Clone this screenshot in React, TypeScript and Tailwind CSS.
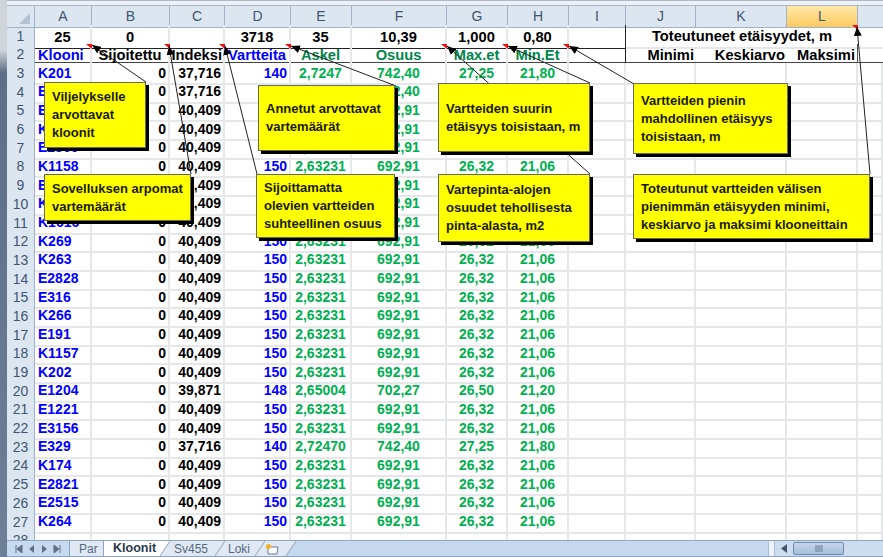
import React from 'react';

const rowGrid = "grid grid-cols-[28px_57px_78px_55px_66px_61px_95px_61px_61px_57px_70px_91px_71px_1fr]";

type Row = [string, string, string, string, string, string, string];

const big: Row = ['0', '40,409', '150', '2,63231', '692,91', '26,32', '21,06'];
const small: Row = ['0', '37,716', '140', '2,72470', '742,40', '27,25', '21,80'];

const rows: [string, Row][] = [
  ['K201', ['0', '37,716', '140', '2,7247', '742,40', '27,25', '21,80']],
  ['E2862', small],
  ['E2863', big],
  ['K1159', big],
  ['E2860', big],
  ['K1158', big],
  ['E2861', big],
  ['K1615', big],
  ['K1616', big],
  ['K269', big],
  ['K263', big],
  ['E2828', big],
  ['E316', big],
  ['K266', big],
  ['E191', big],
  ['K1157', big],
  ['K202', big],
  ['E1204', ['0', '39,871', '148', '2,65004', '702,27', '26,50', '21,20']],
  ['E1221', big],
  ['E3156', big],
  ['E329', small],
  ['K174', big],
  ['E2821', big],
  ['E2515', big],
  ['K264', big],
];

const columns = ['A', 'B', 'C', 'D', 'E', 'F', 'G', 'H', 'I', 'J', 'K', 'L'];

const callouts = [
  { pos: 'left-[44px] top-[82px] w-[102px] h-[66px]', lines: ['Viljelykselle', 'arvottavat', 'kloonit'] },
  { pos: 'left-[44px] top-[174px] w-[147px] h-[47px]', lines: ['Sovelluksen arpomat', 'vartemäärät'] },
  { pos: 'left-[258px] top-[85px] w-[137px] h-[66px]', lines: ['Annetut arvottavat', 'vartemäärät'] },
  { pos: 'left-[256px] top-[174px] w-[139px] h-[64px]', lines: ['Sijoittamatta', 'olevien vartteiden', 'suhteellinen osuus'] },
  { pos: 'left-[438px] top-[83px] w-[152px] h-[69px]', lines: ['Vartteiden suurin', 'etäisyys toisistaan, m'] },
  { pos: 'left-[438px] top-[174px] w-[152px] h-[68px]', lines: ['Vartepinta-alojen', 'osuudet tehollisesta', 'pinta-alasta, m2'] },
  { pos: 'left-[633px] top-[83px] w-[155px] h-[71px]', lines: ['Vartteiden pienin', 'mahdollinen etäisyys', 'toisistaan, m'] },
  { pos: 'left-[633px] top-[174px] w-[237px] h-[65px]', lines: ['Toteutunut vartteiden välisen', 'pienimmän etäisyyden minimi,', 'keskiarvo ja maksimi klooneittain'] },
];

// leader lines from callout to the commented cell: x1,y1 is the arrow tip
const leaders = [
  [92, 45, 146, 82],
  [169, 46, 191, 174],
  [225, 46, 257, 174],
  [291, 46, 396, 86],
  [447, 46, 590, 174],
  [508, 46, 590, 83],
  [569, 46, 634, 84],
  [857, 27, 870, 174],
];

// red comment markers, top right corners
const ticks = [
  [92, 44], [170, 44], [225, 44], [291, 44], [447, 44], [508, 44], [569, 44], [858, 25],
];

const cell = "border-r-2 border-b-2 border-[#e6e7e9] flex items-center overflow-hidden whitespace-nowrap";
const topCell = "flex items-center justify-center border-b border-[#222] border-r-2 border-r-[#e6e7e9]";
const headCell = "flex items-center justify-center border-r-2 border-[#e6e7e9]";

function RowHead({ n, className = '' }: { n: number; className?: string }) {
  return (
    <div className={`flex items-center justify-center bg-[#dce6f1] border-b border-r border-[#9fb2cb] text-[14px] font-normal text-[#3f5570] ${className}`}>
      {n}
    </div>
  );
}

function DataRow({ n, name, r }: { n: number; name: string; r: Row }) {
  return (
    <div className={`${rowGrid} h-[18.7px]`}>
      <RowHead n={n} />
      <div className={`${cell} pl-[3px] font-bold text-[#0000ff]`}>{name}</div>
      <div className={`${cell} justify-end pr-[2px] font-bold text-black`}>{r[0]}</div>
      <div className={`${cell} justify-end pr-[2px] font-bold text-black`}>{r[1]}</div>
      <div className={`${cell} justify-end pr-[2px] font-bold text-[#0000ff]`}>{r[2]}</div>
      <div className={`${cell} justify-center font-bold text-[#00b050]`}>{r[3]}</div>
      <div className={`${cell} justify-center font-bold text-[#00b050]`}>{r[4]}</div>
      <div className={`${cell} justify-center font-bold text-[#00b050]`}>{r[5]}</div>
      <div className={`${cell} justify-center font-bold text-[#00b050]`}>{r[6]}</div>
      <div className={cell} />
      <div className={cell} />
      <div className={cell} />
      <div className={cell} />
      <div className={cell} />
    </div>
  );
}

// slanted edge between two sheet tabs
function Slant({ left, right }: { left: string; right: string }) {
  return (
    <svg className="shrink-0" width="10" height="15" viewBox="0 0 10 15">
      <path d="M0 0H10L0 15z" fill={left} />
      <path d="M10 0V15H0z" fill={right} />
      <path d="M0 15L10 0" stroke="#8ea5c2" fill="none" />
    </svg>
  );
}

export default function App() {
  return (
    <div className="relative w-[883px] h-[557px] overflow-hidden bg-white flex font-['Liberation_Sans',Arial,sans-serif] text-[14px]">
      {/* window edge on the left */}
      <div className="w-[7px] shrink-0 bg-gradient-to-b from-[#d0d5dc] from-[9%] via-[#5d6f85] via-[13%] to-[#6d8098]" />

      <div className="flex-1 min-w-0 flex flex-col">
        <div className="h-[6px] shrink-0 bg-[#eef1f5] border-t border-b border-[#a9b7c9]" />

        {/* column letters */}
        <div className={`${rowGrid} h-[19px] shrink-0 text-[#3f5570]`}>
          <div className="relative bg-[#dce6f1] border-r border-b border-[#9fb2cb]">
            <div className="absolute right-[4px] bottom-[3px] w-0 h-0 border-l-[11px] border-l-transparent border-b-[11px] border-b-[#b4c2d2]" />
          </div>
          {columns.map((c) => (
            <div
              key={c}
              className={`flex items-center justify-center border-r border-b border-[#9fb2cb] ${c === 'L' ? 'bg-gradient-to-b from-[#ffe9a8] to-[#fdc95c]' : 'bg-[#dce6f1]'}`}
            >
              {c}
            </div>
          ))}
          <div className="bg-[#dce6f1] border-b border-[#9fb2cb]" />
        </div>

        {/* row 1 */}
        <div className={`${rowGrid} h-[19px] shrink-0 font-bold text-black text-[14.7px]`}>
          <RowHead n={1} />
          <div className={topCell}>25</div>
          <div className={topCell}>0</div>
          <div className={topCell} />
          <div className={topCell}>3718</div>
          <div className={topCell}>35</div>
          <div className={topCell}>10,39</div>
          <div className={topCell}>1,000</div>
          <div className={topCell}>0,80</div>
          <div className="border-b border-r border-[#222]" />
          <div className="col-span-3 flex items-center justify-center border-b-2 border-[#e6e7e9]">Toteutuneet etäisyydet, m</div>
          <div className="border-b-2 border-[#e6e7e9]" />
        </div>

        {/* row 2 */}
        <div className={`${rowGrid} h-[19px] shrink-0 font-bold text-[14.7px] border-b border-[#444]`}>
          <RowHead n={2} />
          <div className="flex items-center pl-[3px] text-[#0000ff] border-r-2 border-[#e6e7e9]">Klooni</div>
          <div className={`${headCell} text-black`}>Sijoitettu</div>
          <div className="flex items-center justify-end pr-[1px] text-black border-r-2 border-[#e6e7e9]">Indeksi</div>
          <div className={`${headCell} text-[#0000ff]`}>Vartteita</div>
          <div className={`${headCell} text-[#00864a]`}>Askel</div>
          <div className={`${headCell} text-[#00864a]`}>Osuus</div>
          <div className={`${headCell} text-[#00864a]`}>Max.et</div>
          <div className={`${headCell} text-[#00864a]`}>Min.Et</div>
          <div className="border-r border-[#222]" />
          <div className="flex items-center justify-end pr-[2px] text-black whitespace-nowrap">Minimi</div>
          <div className="flex items-center justify-end pr-[2px] text-black whitespace-nowrap">Keskiarvo</div>
          <div className="flex items-center justify-end pr-[2px] text-black whitespace-nowrap border-r border-[#555]">Maksimi</div>
          <div />
        </div>

        {/* data */}
        <div className="flex-1 min-h-0 overflow-hidden">
          {rows.map(([name, r], i) => (
            <DataRow key={i} n={i + 3} name={name} r={r} />
          ))}
          <div className={`${rowGrid} h-[18.7px]`}>
            <RowHead n={28} />
            <div className={cell} />
            <div className={cell} />
            <div className={cell} />
            <div className={cell} />
            <div className={cell} />
            <div className={cell} />
            <div className={cell} />
            <div className={cell} />
            <div className={cell} />
            <div className={cell} />
            <div className={cell} />
            <div className={cell} />
            <div className={cell} />
          </div>
        </div>

        {/* sheet tabs and scroll bar */}
        <div className="h-[16px] shrink-0 flex items-stretch bg-[#c6d9ee] border-t border-[#8ea5c2] text-[12px] text-[#55687f]">
          <div className="w-[62px] shrink-0 flex items-center justify-around px-[5px]">
            <svg width="8" height="8" viewBox="0 0 8 8"><path d="M1 0v8M7 0v8L2 4z" fill="#5f7188" stroke="#5f7188" strokeWidth="1" /></svg>
            <svg width="6" height="8" viewBox="0 0 6 8"><path d="M5 0v8L0 4z" fill="#5f7188" /></svg>
            <svg width="6" height="8" viewBox="0 0 6 8"><path d="M1 0v8l5-4z" fill="#5f7188" /></svg>
            <svg width="8" height="8" viewBox="0 0 8 8"><path d="M7 0v8M1 0v8l5-4z" fill="#5f7188" stroke="#5f7188" strokeWidth="1" /></svg>
          </div>
          <div className="w-[35px] shrink-0 flex items-center pl-[9px] bg-[#dfe8f3] border-l border-r border-[#8ea5c2]">Par</div>
          <div className="w-[56px] shrink-0 flex items-center pl-[9px] bg-white font-bold text-[12.5px] text-[#2b3a4e]">Kloonit</div>
          <Slant left="#ffffff" right="#dfe8f3" />
          <div className="w-[45px] shrink-0 flex items-center pl-[4px] bg-[#dfe8f3]">Sv455</div>
          <Slant left="#dfe8f3" right="#dfe8f3" />
          <div className="w-[30px] shrink-0 flex items-center pl-[3px] bg-[#dfe8f3]">Loki</div>
          <Slant left="#dfe8f3" right="#dfe8f3" />
          <div className="w-[21px] shrink-0 flex items-center bg-[#dfe8f3]">
            <svg width="15" height="12" viewBox="0 0 15 12">
              <path d="M3 4h10l-1 7H3z" fill="#fff" stroke="#6b7d93" />
              <circle cx="3.5" cy="3.5" r="2.5" fill="#f0b429" />
            </svg>
          </div>
          <Slant left="#dfe8f3" right="#c6d9ee" />
          <div className="flex-1" />
          <div className="w-[7px] shrink-0 bg-[#eef3fa] border-l border-r border-[#a9bdd6]" />
          <div className="w-[18px] shrink-0 flex items-center justify-center bg-[#cddcee]">
            <svg width="6" height="9" viewBox="0 0 6 9"><path d="M6 0v9L0 4.5z" fill="#3f5570" /></svg>
          </div>
          <div className="w-[51px] shrink-0 flex items-center justify-center my-[1px] rounded-[2px] bg-gradient-to-b from-[#c5d6ea] to-[#a5bfdc] border border-[#6f8cae]">
            <svg width="8" height="7" viewBox="0 0 8 7"><path d="M1 0v7M3 0v7M5 0v7M7 0v7" stroke="#6b7d93" /></svg>
          </div>
          <div className="w-[39px] shrink-0 bg-[#cddcee]" />
        </div>
        <div className="h-[1px] shrink-0 bg-[#8ea5c2]" />
      </div>

      {/* leader lines and comment markers sit over the cells */}
      <svg className="absolute left-0 top-0 pointer-events-none" width="883" height="557">
        <defs>
          <marker id="head" markerWidth="9" markerHeight="8" refX="0" refY="4" orient="auto" markerUnits="userSpaceOnUse">
            <path d="M0 4L9 0V8z" fill="#000" />
          </marker>
        </defs>
        {ticks.map(([x, y], i) => (
          <path key={i} d={`M${x - 6} ${y}H${x}V${y + 5}z`} fill="#f01010" />
        ))}
        {leaders.map(([x1, y1, x2, y2], i) => (
          <line key={i} x1={x1} y1={y1} x2={x2} y2={y2} stroke="#222" strokeWidth="1" markerStart="url(#head)" />
        ))}
      </svg>

      {callouts.map((c, i) => (
        <div
          key={i}
          className={`absolute ${c.pos} flex flex-col justify-center pl-[7px] bg-[#ffff00] border border-[#666] shadow-[3px_3px_0_#000] font-bold text-[13px] leading-[18px] text-[#1a1a00] whitespace-nowrap`}
        >
          {c.lines.map((l) => (
            <div key={l}>{l}</div>
          ))}
        </div>
      ))}
    </div>
  );
}
